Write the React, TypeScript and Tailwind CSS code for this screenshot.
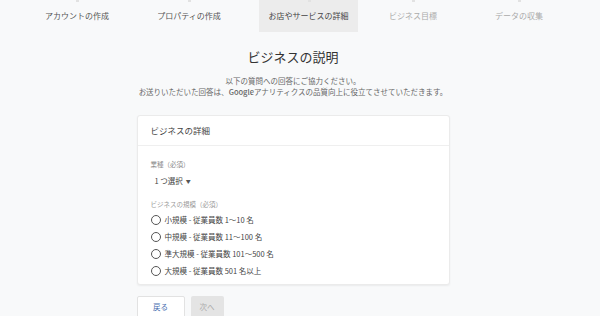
import React from "react";

const steps = [
  { label: "アカウントの作成", w: "w-[84px]", state: "done" },
  { label: "プロパティの作成", w: "w-[140px]", state: "done" },
  { label: "お店やサービスの詳細", w: "w-[99px]", state: "active" },
  { label: "ビジネス目標", w: "w-[110px]", state: "todo" },
  { label: "データの収集", w: "w-[102px]", state: "todo" },
];

const sizes = [
  "小規模 - 従業員数 1～10 名",
  "中規模 - 従業員数 11～100 名",
  "準大規模 - 従業員数 101～500 名",
  "大規模 - 従業員数 501 名以上",
];

export default function App() {
  return (
    <div
      className="w-[600px] h-[316px] overflow-hidden bg-[#f8f9fa] text-[#333]"
      style={{ fontFamily: '"Noto Sans CJK JP", "Liberation Sans", sans-serif' }}
    >
      {/* steps */}
      <div className="flex h-[32px] pl-[35px]">
        {steps.map((s) => (
          <div
            key={s.label}
            className={`${s.w} relative flex items-center justify-center text-[8px] ${
              s.state === "active"
                ? "bg-[#ececec] text-[#444]"
                : s.state === "done"
                ? "text-[#555]"
                : "text-[#aaa]"
            }`}
          >
            <span className="absolute top-0 left-1/2 -ml-[1px] w-[3px] h-[2px] bg-[#e2e2e2]" />
            {s.label}
          </div>
        ))}
      </div>

      <div className="w-[586px] flex flex-col items-center">
        <h1 className="mt-[15px] text-[13px] leading-[20px] text-[#333]">ビジネスの説明</h1>
        <div className="mt-[8px] text-center text-[7.5px] leading-[11px] text-[#666]">
          <p>以下の質問への回答にご協力ください。</p>
          <p>
            お送りいただいた回答は、
            <span className="font-medium">Google</span>
            アナリティクスの品質向上に役立てさせていただきます。
          </p>
        </div>

        <div className="mt-[18px] w-[313px] bg-white border border-[#ebebeb] rounded-[3px] shadow-[0_1px_2px_rgba(0,0,0,0.06)]">
          <div className="h-[30px] flex items-center px-[13px] border-b border-[#efefef] text-[8.5px] text-[#444]">
            ビジネスの詳細
          </div>
          <div className="px-[13px] pt-[13px] pb-[5px]">
            <div className="text-[6.5px] leading-[10px] text-[#888]">業種（必須）</div>
            <div className="mt-[6px] flex items-center gap-[3px] pl-[4px] text-[7.5px] leading-[12px] text-[#444]">
              <span>1 つ選択</span>
              <span className="text-[5px] text-[#555]">▼</span>
            </div>
            <div className="mt-[12px] text-[6.5px] leading-[10px] text-[#999]">ビジネスの規模（必須）</div>
            <div className="mt-[2px] flex flex-col">
              {sizes.map((s) => (
                <div key={s} className="h-[17px] flex items-center gap-[4px]">
                  <span className="w-[10px] h-[10px] rounded-full border border-[#555]" />
                  <span className="text-[7.5px] text-[#444]">{s}</span>
                </div>
              ))}
            </div>
          </div>
        </div>

        <div className="mt-[11px] w-[313px] flex gap-[6px]">
          <button className="w-[48px] h-[22px] bg-white border border-[#e2e2e2] rounded-[2px] text-[7.5px] text-[#4a6fb0]">
            戻る
          </button>
          <button className="w-[33px] h-[22px] bg-[#e4e4e4] rounded-[2px] text-[7.5px] text-[#aaa]">
            次へ
          </button>
        </div>
      </div>
    </div>
  );
}
